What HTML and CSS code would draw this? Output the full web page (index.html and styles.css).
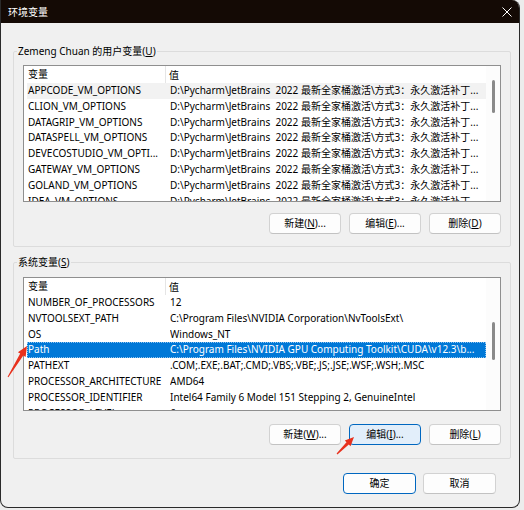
FILE: index.html
```html
<!DOCTYPE html>
<html lang="zh-CN">
<head>
<meta charset="utf-8">
<title>环境变量</title>
<link rel="stylesheet" href="styles.css">
</head>
<body>
<div class="window">
  <div class="titlebar">
    <span class="title">环境变量</span>
    <svg class="close" width="10" height="10" viewBox="0 0 10 10"><path d="M0.5 0.5 L9.5 9.5 M9.5 0.5 L0.5 9.5" stroke="#ffffff" stroke-width="1" fill="none"/></svg>
  </div>
  <div class="content">
    <fieldset class="group">
      <legend>Zemeng Chuan 的用户变量(<u>U</u>)</legend>
      <div class="list list-user">
        <div class="main">
          <div class="head"><span class="hc1">变量</span><span class="hc2">值</span></div>
          <div class="rows">
            <div class="row hover"><span class="c1">APPCODE_VM_OPTIONS</span><span class="c2">D:\Pycharm\JetBrains&nbsp; 2022 最新全家桶激活\方式3：永久激活补丁...</span></div>
            <div class="row"><span class="c1">CLION_VM_OPTIONS</span><span class="c2">D:\Pycharm\JetBrains&nbsp; 2022 最新全家桶激活\方式3：永久激活补丁...</span></div>
            <div class="row"><span class="c1">DATAGRIP_VM_OPTIONS</span><span class="c2">D:\Pycharm\JetBrains&nbsp; 2022 最新全家桶激活\方式3：永久激活补丁...</span></div>
            <div class="row"><span class="c1">DATASPELL_VM_OPTIONS</span><span class="c2">D:\Pycharm\JetBrains&nbsp; 2022 最新全家桶激活\方式3：永久激活补丁...</span></div>
            <div class="row"><span class="c1">DEVECOSTUDIO_VM_OPTI...</span><span class="c2">D:\Pycharm\JetBrains&nbsp; 2022 最新全家桶激活\方式3：永久激活补丁...</span></div>
            <div class="row"><span class="c1">GATEWAY_VM_OPTIONS</span><span class="c2">D:\Pycharm\JetBrains&nbsp; 2022 最新全家桶激活\方式3：永久激活补丁...</span></div>
            <div class="row"><span class="c1">GOLAND_VM_OPTIONS</span><span class="c2">D:\Pycharm\JetBrains&nbsp; 2022 最新全家桶激活\方式3：永久激活补丁...</span></div>
            <div class="row"><span class="c1">IDEA_VM_OPTIONS</span><span class="c2">D:\Pycharm\JetBrains&nbsp; 2022 最新全家桶激活\方式3：永久激活补丁...</span></div>
          </div>
        </div>
        <div class="scroll"><div class="thumb thumb-user"></div></div>
      </div>
      <div class="buttons">
        <button class="btn">新建(<u>N</u>)...</button>
        <button class="btn">编辑(<u>E</u>)...</button>
        <button class="btn">删除(<u>D</u>)</button>
      </div>
    </fieldset>

    <fieldset class="group group-sys">
      <legend>系统变量(<u>S</u>)</legend>
      <div class="list list-sys">
        <div class="main">
          <div class="head"><span class="hc1">变量</span><span class="hc2">值</span></div>
          <div class="rows">
            <div class="row"><span class="c1">NUMBER_OF_PROCESSORS</span><span class="c2">12</span></div>
            <div class="row"><span class="c1">NVTOOLSEXT_PATH</span><span class="c2">C:\Program Files\NVIDIA Corporation\NvToolsExt\</span></div>
            <div class="row"><span class="c1">OS</span><span class="c2">Windows_NT</span></div>
            <div class="row selected"><span class="c1">Path</span><span class="c2">C:\Program Files\NVIDIA GPU Computing Toolkit\CUDA\v12.3\b...</span></div>
            <div class="row"><span class="c1">PATHEXT</span><span class="c2">.COM;.EXE;.BAT;.CMD;.VBS;.VBE;.JS;.JSE;.WSF;.WSH;.MSC</span></div>
            <div class="row"><span class="c1">PROCESSOR_ARCHITECTURE</span><span class="c2">AMD64</span></div>
            <div class="row"><span class="c1">PROCESSOR_IDENTIFIER</span><span class="c2">Intel64 Family 6 Model 151 Stepping 2, GenuineIntel</span></div>
            <div class="row"><span class="c1">PROCESSOR_LEVEL</span><span class="c2">6</span></div>
          </div>
        </div>
        <div class="scroll"><div class="thumb thumb-sys"></div></div>
      </div>
      <div class="buttons">
        <button class="btn">新建(<u>W</u>)...</button>
        <button class="btn focused">编辑(<u>I</u>)...</button>
        <button class="btn">删除(<u>L</u>)</button>
      </div>
    </fieldset>

    <div class="footer">
      <button class="btn wide default">确定</button>
      <button class="btn wide">取消</button>
    </div>
  </div>
</div>
<svg class="arrows" width="524" height="510" viewBox="0 0 524 510">
  <polygon fill="#e8311d" points="27,346 25.6,356.9 23.3,355.5 8.4,377.3 7.6,376.7 20.2,353.6 17.9,352.2"/>
  <polygon fill="#e8311d" points="354,437 350.5,446.2 348.8,444.5 337.4,454.4 336.6,453.6 346.5,442.2 344.8,440.5"/>
</svg>
</body>
</html>
```

FILE: styles.css
```css
* { box-sizing: border-box; }
html, body { margin: 0; padding: 0; }
body {
  width: 524px;
  height: 510px;
  overflow: hidden;
  background: #ececec;
  font-family: "Noto Sans", "Noto Sans CJK SC", sans-serif;
  font-size: 10px;
  color: #000;
  position: relative;
}
.window {
  width: 520px;
  height: 508px;
  background: #f0f0f0;
  border: 1px solid #2a2a2a;
  border-top: none;
  border-radius: 0 8px 8px 8px;
  overflow: hidden;
  display: flex;
  flex-direction: column;
}
.titlebar {
  height: 23px;
  flex: none;
  background: #140a05;
  color: #fff;
  display: flex;
  align-items: center;
  justify-content: space-between;
  padding: 0 7px 0 7px;
}
.title { font-size: 10px; line-height: 14px; }
.close { display: block; margin-right: 0; }
.content {
  padding: 20px 8px 0 12px;
  display: flex;
  flex-direction: column;
}
.group {
  margin: 0;
  border: 1px solid #dcdcdc;
  border-radius: 2px;
  padding: 6px 9px 12px 9px;
  min-width: 0;
}
.group-sys { margin-top: 7px; padding-top: 7px; padding-bottom: 13px; }
.group legend {
  margin-left: -6px;
  padding: 0 1px;
  line-height: 16px;
  font-size: 10px;
}
.list {
  background: #fff;
  border: 1px solid #8f8f8f;
  display: flex;
  overflow: hidden;
}
.list-user { height: 137px; }
.list-sys { height: 134px; }
.main {
  flex: 1;
  min-width: 0;
  padding-left: 3px;
  display: flex;
  flex-direction: column;
}
.head {
  height: 17px;
  flex: none;
  display: flex;
  align-items: center;
}
.hc1 {
  width: 139px;
  height: 17px;
  line-height: 17px;
  padding-left: 1px;
  border-right: 1px solid #e5e5e5;
}
.hc2 { padding-left: 3px; }
.rows { flex: 1; overflow: hidden; }
.row {
  display: flex;
  height: 15.8px;
  line-height: 15.8px;
  white-space: nowrap;
}
.row.hover { background: #f2f2f2; }
.row.selected {
  background: #0078d7;
  color: #fff;
  outline: 1px dotted #8fc3ee;
  outline-offset: -1px;
}
.c1 {
  width: 143px;
  flex: none;
  padding-left: 1px;
  overflow: hidden;
}
.c2 { flex: 1; min-width: 0; overflow: hidden; }
.scroll {
  width: 14px;
  flex: none;
  background: #fcfcfc;
  position: relative;
}
.thumb {
  position: absolute;
  left: 6px;
  width: 3px;
  border-radius: 2px;
  background: #8a8a8a;
}
.thumb-user { top: 14px; height: 33px; }
.thumb-sys { top: 44px; height: 38px; }
.buttons {
  display: flex;
  justify-content: flex-end;
  gap: 8px;
  margin-top: 11px;
}
.group-sys .buttons { margin-top: 13px; }
.btn {
  width: 72px;
  height: 21px;
  padding: 0;
  font-family: inherit;
  font-size: 10px;
  color: #000;
  background: #fdfdfd;
  border: 1px solid #d2d2d2;
  border-bottom-color: #c2c2c2;
  border-radius: 4px;
  line-height: 19px;
}
.btn.focused {
  background: #e2eefa;
  border: 1px solid #0067c0;
}
.btn.default { border: 1px solid #0067c0; }
.footer {
  display: flex;
  justify-content: flex-end;
  gap: 7px;
  margin-top: 14px;
  padding-right: 15px;
}
.btn.wide { width: 73px; }
.arrows {
  position: absolute;
  left: 0;
  top: 0;
  pointer-events: none;
}
```
